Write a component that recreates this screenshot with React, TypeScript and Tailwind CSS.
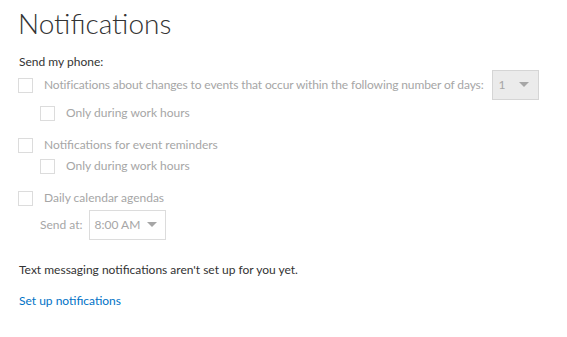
const Check = ({ label, tight }: { label: string; tight?: boolean }) => (
  <label className="flex items-center gap-[11px] whitespace-nowrap">
    <span className="w-[15px] h-[15px] border border-[#dcdcdc] bg-white shrink-0" />
    <span className={tight ? "text-[#a6a6a6] tracking-[-0.12px]" : "text-[#a6a6a6]"}>{label}</span>
  </label>
);

const Caret = () => (
  <svg width="10" height="6" viewBox="0 0 10 6" className="shrink-0">
    <path d="M0 0 L10 0 L5 5 Z" fill="#a6a6a6" />
  </svg>
);

export default function App() {
  return (
    <div
      className="w-[567px] h-[337px] bg-white px-[18px] pt-[6px] text-[12px] leading-[16px] text-[#333]"
      style={{ fontFamily: '"Segoe UI", Lato, "Open Sans", sans-serif' }}
    >
      <h1 className="h-[34px] text-[28px] leading-[34px] font-light text-[#333]">Notifications</h1>

      <p className="mt-[14px] h-[16px] pl-[1px]">Send my phone:</p>

      <div className="h-[30px] flex items-center">
        <Check tight label="Notifications about changes to events that occur within the following number of days:" />
        <div className="ml-[8px] w-[47px] h-[30px] border border-[#d5d5d5] bg-[#ebebeb] flex items-center justify-between pl-[6px] pr-[9px] text-[#a6a6a6]">
          <span>1</span>
          <Caret />
        </div>
      </div>
      <div className="mt-[5px] ml-[22px] h-[16px] flex items-center">
        <Check label="Only during work hours" />
      </div>

      <div className="mt-[16px] h-[16px] flex items-center">
        <Check label="Notifications for event reminders" />
      </div>
      <div className="mt-[5px] ml-[22px] h-[16px] flex items-center">
        <Check label="Only during work hours" />
      </div>

      <div className="mt-[16px] h-[16px] flex items-center">
        <Check label="Daily calendar agendas" />
      </div>
      <div className="mt-[4px] ml-[22px] h-[30px] flex items-center gap-[6px]">
        <span className="text-[#a6a6a6]">Send at:</span>
        <div className="w-[77px] h-[30px] border border-[#dcdcdc] bg-white flex items-center justify-between pl-[5px] pr-[8px] text-[#a6a6a6]">
          <span>8:00 AM</span>
          <Caret />
        </div>
      </div>

      <p className="mt-[22px] h-[16px] pl-[1px]">Text messaging notifications aren't set up for you yet.</p>
      <a className="block mt-[15px] h-[16px] pl-[1px] text-[#0072c6]">Set up notifications</a>
    </div>
  );
}
